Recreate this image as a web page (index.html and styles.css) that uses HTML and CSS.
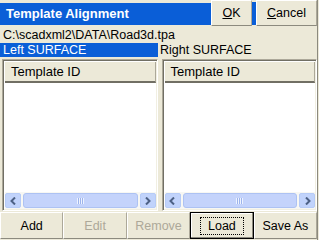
FILE: index.html
```html
<!DOCTYPE html>
<html lang="en">
<head>
    <meta charset="UTF-8">
    <title>Template Alignment</title>
    <link rel="stylesheet" href="styles.css">
</head>
<body>
    <div class="dialog">
        <div class="titlebar">
            <div class="title">Template Alignment</div>
            <button class="btn btn-ok"><u>O</u>K</button>
            <div class="title-gap"></div>
            <button class="btn btn-cancel"><u>C</u>ancel</button>
        </div>

        <div class="path">C:\scadxml2\DATA\Road3d.tpa</div>

        <div class="surfaces">
            <div class="surface selected">Left SURFACE</div>
            <div class="surface">Right SURFACE</div>
        </div>

        <div class="lists">
            <div class="listbox">
                <div class="list-header"><span>Template ID</span></div>
                <div class="list-body"></div>
                <div class="hscroll">
                    <div class="arrow">
                        <svg width="7" height="8" viewBox="0 0 7 8"><path d="M5 0.5 L1.5 4 L5 7.5" fill="none" stroke="#4d6185" stroke-width="2"/></svg>
                    </div>
                    <div class="thumb"><span class="grip"></span></div>
                    <div class="arrow">
                        <svg width="7" height="8" viewBox="0 0 7 8"><path d="M2 0.5 L5.5 4 L2 7.5" fill="none" stroke="#4d6185" stroke-width="2"/></svg>
                    </div>
                </div>
            </div>
            <div class="listbox">
                <div class="list-header"><span>Template ID</span></div>
                <div class="list-body"></div>
                <div class="hscroll">
                    <div class="arrow">
                        <svg width="7" height="8" viewBox="0 0 7 8"><path d="M5 0.5 L1.5 4 L5 7.5" fill="none" stroke="#4d6185" stroke-width="2"/></svg>
                    </div>
                    <div class="thumb"><span class="grip"></span></div>
                    <div class="arrow">
                        <svg width="7" height="8" viewBox="0 0 7 8"><path d="M2 0.5 L5.5 4 L2 7.5" fill="none" stroke="#4d6185" stroke-width="2"/></svg>
                    </div>
                </div>
            </div>
        </div>

        <div class="actions">
            <button class="btn">Add</button>
            <button class="btn" disabled>Edit</button>
            <button class="btn" disabled>Remove</button>
            <button class="btn btn-focus"><span class="focus">Load</span></button>
            <button class="btn">Save As</button>
        </div>
    </div>
</body>
</html>
```

FILE: styles.css
```css
body {
    margin: 0;
    background-color: #ece9d8;
    font-family: "Liberation Sans", Arial, sans-serif;
    font-size: 12.5px;
    color: #000;
}
.dialog {
    width: 317px;
    height: 240px;
    border-right: 1px solid #8c8a7e;
    display: flex;
    flex-direction: column;
    overflow: hidden;
}
.titlebar {
    display: flex;
    height: 27px;
}
.title {
    flex: 1;
    margin: 3px 0 2px;
    padding-left: 6px;
    background-color: #0a5ed7;
    color: white;
    font-weight: bold;
    font-size: 13px;
    line-height: 22px;
}
.title-gap {
    width: 4px;
    margin: 2px 0 2px;
    background-color: #0a5ed7;
}
.btn {
    font-family: "Liberation Sans", Arial, sans-serif;
    font-size: 12.5px;
    font-weight: normal;
    color: #000;
    background-color: #ece9d8;
    border: 1px solid;
    border-color: #fff #aca899 #8c8a7e #fff;
    padding: 0;
    margin: 0;
}
.btn:disabled {
    color: #aca899;
}
.btn-ok {
    width: 41px;
    height: 26px;
}
.btn-cancel {
    width: 61px;
    height: 26px;
}
.path {
    height: 16px;
    line-height: 16px;
    padding-left: 3px;
}
.surfaces {
    display: flex;
    height: 14px;
    line-height: 14px;
}
.surface {
    padding-left: 2px;
}
.surface.selected {
    width: 155px;
    padding-left: 3px;
    background-color: #0a5ed7;
    color: white;
}
.lists {
    display: flex;
    gap: 4px;
    padding: 2px 0 0 2px;
    height: 153px;
}
.listbox {
    flex: 1;
    display: flex;
    flex-direction: column;
    background-color: white;
    border: 1px solid;
    border-color: #aca899 #fff #fff #aca899;
    box-shadow: inset 1px 1px 0 #716f64, inset -1px -1px 0 #f1efe2;
    padding: 2px 1px 1px 2px;
}
.list-header {
    height: 19px;
    line-height: 19px;
    background-color: #ece9d8;
    border-bottom: 2px solid #716f64;
    border-right: 1px solid #aca899;
    font-size: 13px;
    padding-left: 6px;
}
.list-body {
    flex: 1;
}
.hscroll {
    display: flex;
    height: 17px;
    gap: 1px;
    background-color: #f7f7f3;
}
.arrow {
    width: 16px;
    height: 15px;
    margin-top: 1px;
    background-color: #c1d3fb;
    border: 1px solid #b6cbf6;
    border-radius: 2px;
    box-sizing: border-box;
    display: flex;
    align-items: center;
    justify-content: center;
}
.thumb {
    flex: 1;
    margin: 1px 1px 0;
    height: 15px;
    box-sizing: border-box;
    background-color: #c4d3fb;
    border: 1px solid #adc2f3;
    border-radius: 3px;
    display: flex;
    align-items: center;
    justify-content: center;
}
.grip {
    width: 7px;
    height: 6px;
    background: repeating-linear-gradient(90deg, #eef3ff 0 1px, #9db4ec 1px 2px);
}
.actions {
    display: flex;
    height: 28px;
    padding-top: 1px;
}
.actions .btn {
    flex: 1;
    height: 27px;
}
.btn-focus {
    border: 1px solid #000;
    box-shadow: inset -1px -1px 0 #8c8a7e, inset 1px 1px 0 #fff;
}
.focus {
    display: inline-block;
    padding: 1px 7px;
    border: 1px dotted #000;
}
```
